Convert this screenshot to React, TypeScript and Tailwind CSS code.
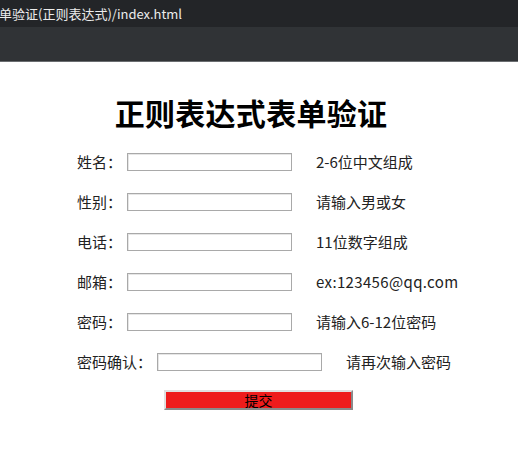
import React from "react";

const font = { fontFamily: '"Noto Sans CJK SC", "Noto Sans", sans-serif' };

function Row({ label, hint, wide }: { label: string; hint: string; wide?: boolean }) {
  return (
    <div className="flex h-[18px] items-center text-[15px] text-[#222]">
      <span className="leading-[18px] whitespace-nowrap">{label}</span>
      <div className="ml-[5px] h-[18px] w-[165px] border border-[#a9a9a9] bg-white shadow-[inset_1px_1px_0_#e6e6e6]" />
      <span className={wide ? "ml-[24px] leading-[18px] whitespace-nowrap tracking-[0.35px]" : "ml-[24px] leading-[18px] whitespace-nowrap"}>{hint}</span>
    </div>
  );
}

export default function App() {
  return (
    <div className="h-[472px] w-[518px] overflow-hidden bg-white" style={font}>
      <div className="flex h-[27px] items-center bg-[#232528] text-[13px] text-[#ececec]">
        <span className="ml-[-1px] whitespace-nowrap">单验证(正则表达式)/index.html</span>
      </div>
      <div className="h-[34px] bg-[#303336]" />
      <div className="h-[1px] bg-[#6a6d70]" />
      <div className="flex w-[502px] justify-center pt-[35px]">
        <h1 className="text-[30px] font-bold leading-[30px] tracking-[0.3px] text-black">正则表达式表单验证</h1>
      </div>
      <div className="flex flex-col gap-[22px] pl-[77px] pt-[26px]">
        <Row label="姓名：" hint="2-6位中文组成" />
        <Row label="性别：" hint="请输入男或女" />
        <Row label="电话：" hint="11位数字组成" />
        <Row label="邮箱：" hint="ex:123456@qq.com" wide />
        <Row label="密码：" hint="请输入6-12位密码" />
        <Row label="密码确认：" hint="请再次输入密码" />
      </div>
      <div className="ml-[164px] mt-[19px] flex h-[20px] w-[189px] items-center justify-center border-2 border-t-[#e0e0e0] border-l-[#e0e0e0] border-b-[#8a8a8a] border-r-[#8a8a8a] bg-[#ee1c1c] text-[14px] leading-[16px] text-black">
        提交
      </div>
    </div>
  );
}
